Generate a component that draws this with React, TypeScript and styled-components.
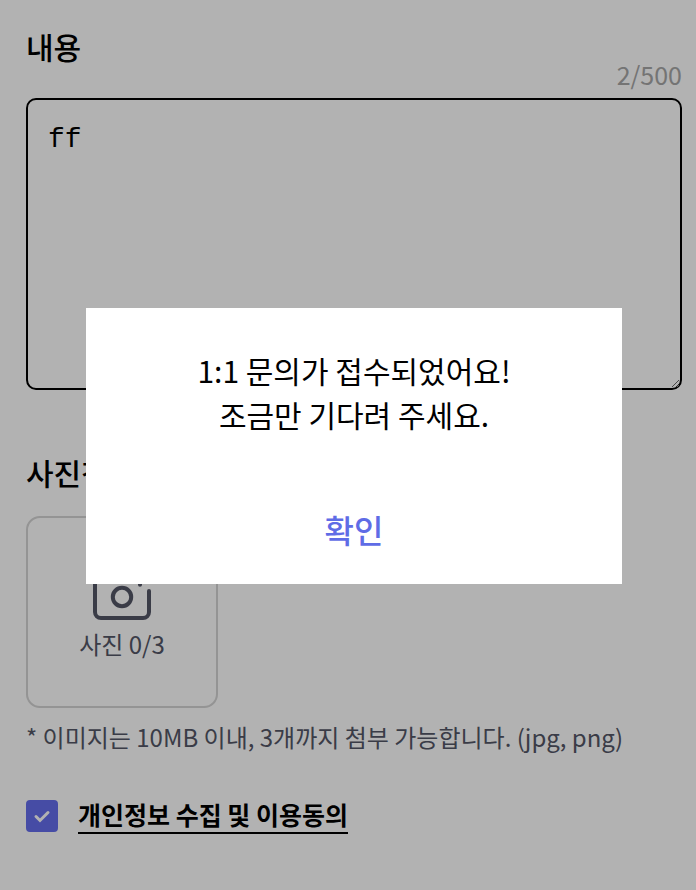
import { useState } from "react";
import styled, { createGlobalStyle } from "styled-components";

const GlobalStyle = createGlobalStyle`
  *, *::before, *::after { box-sizing: border-box; }
  body {
    margin: 0;
    background: #ffffff;
    color: #000000;
    font-family: "Noto Sans CJK KR", sans-serif;
  }
`;

const Form = styled.form`
  display: flex;
  flex-direction: column;
  padding: 24px 14px 56px 26px;
`;

const Label = styled.label`
  font-size: 30px;
  font-weight: 500;
  line-height: 44px;
`;

const FieldHead = styled.div`
  display: flex;
  justify-content: space-between;
  align-items: flex-start;
  height: 74px;
`;

const Counter = styled.span`
  align-self: flex-end;
  padding-bottom: 8px;
  color: #a7a7a7;
  font-size: 25px;
  line-height: 32px;
`;

const Content = styled.textarea`
  display: block;
  width: 100%;
  height: 292px;
  padding: 22px 20px;
  border: 2px solid #000000;
  border-radius: 10px;
  outline: none;
  background: transparent;
  color: #000000;
  font-family: "Liberation Mono", monospace;
  font-size: 28px;
  line-height: 36px;
  resize: both;
`;

const PhotoField = styled.div`
  display: flex;
  flex-direction: column;
  align-items: flex-start;
  gap: 22px;
  margin-top: 60px;
`;

const PhotoButton = styled.button`
  display: flex;
  flex-direction: column;
  align-items: center;
  justify-content: center;
  width: 192px;
  height: 192px;
  padding: 0;
  border: 2px solid #d4d4d4;
  border-radius: 14px;
  background: transparent;
  color: #535666;
  font-family: inherit;
  font-size: 24px;
  line-height: 40px;
`;

const Hint = styled.p`
  margin: 12px 0 0;
  color: #535666;
  font-size: 24px;
  line-height: 34px;
`;

const Consent = styled.div`
  display: flex;
  align-items: flex-start;
  gap: 20px;
  margin-top: 46px;
`;

const CheckWrap = styled.span`
  display: grid;
  width: 32px;
  height: 32px;

  & > * {
    grid-area: 1 / 1;
  }

  svg {
    pointer-events: none;
  }
`;

const CheckInput = styled.input`
  appearance: none;
  width: 32px;
  height: 32px;
  margin: 0;
  border: 2px solid #656eed;
  border-radius: 4px;

  &:checked {
    background: #656eed;
  }
`;

const ConsentLink = styled.a`
  padding-bottom: 4px;
  border-bottom: 2px solid #000000;
  color: #000000;
  font-size: 25px;
  font-weight: 700;
  line-height: 28px;
  text-decoration: none;
`;

const Overlay = styled.div`
  position: fixed;
  inset: 0;
  display: flex;
  align-items: center;
  padding: 2px 74px 0 86px;
  background: rgba(0, 0, 0, 0.3);
`;

const Dialog = styled.div`
  display: flex;
  flex: 1;
  flex-direction: column;
  align-items: center;
  gap: 69px;
  padding: 40px 20px 31px;
  background: #ffffff;
`;

const Message = styled.p`
  margin: 0;
  font-size: 30px;
  line-height: 44px;
  text-align: center;
`;

const Confirm = styled.button`
  padding: 0 20px;
  border: 0;
  background: none;
  color: #5f6ce6;
  font-family: inherit;
  font-size: 32px;
  font-weight: 500;
  line-height: 48px;
`;

function CameraIcon() {
  return (
    <svg width="64" height="64" viewBox="0 0 64 64" fill="none" stroke="currentColor" strokeWidth="4" strokeLinecap="round" aria-hidden="true">
      <path d="M38 12H10a5 5 0 0 0-5 5v35a6 6 0 0 0 6 6h42a6 6 0 0 0 6-6V31" />
      <circle cx="32" cy="37" r="9.2" />
      <path d="M50 6v18.7M41 15h18" />
    </svg>
  );
}

function CheckIcon() {
  return (
    <svg width="32" height="32" viewBox="0 0 32 32" fill="none" stroke="#ffffff" strokeWidth="3" strokeLinecap="round" aria-hidden="true">
      <path d="M10 16.5l4 4 8-8" />
    </svg>
  );
}

export default function App() {
  const [text, setText] = useState("ff");
  const [agreed, setAgreed] = useState(true);
  const [open, setOpen] = useState(true);

  return (
    <>
      <GlobalStyle />
      <Form>
        <FieldHead>
          <Label htmlFor="content">내용</Label>
          <Counter>{text.length}/500</Counter>
        </FieldHead>
        <Content id="content" maxLength={500} spellCheck={false} value={text} onChange={(e) => setText(e.target.value)} />
        <PhotoField>
          <Label htmlFor="photo">사진첨부</Label>
          <PhotoButton id="photo" type="button">
            <CameraIcon />
            <span>사진 0/3</span>
          </PhotoButton>
        </PhotoField>
        <Hint>* 이미지는 10MB 이내, 3개까지 첨부 가능합니다. (jpg, png)</Hint>
        <Consent>
          <CheckWrap>
            <CheckInput type="checkbox" aria-labelledby="consent-text" checked={agreed} onChange={(e) => setAgreed(e.target.checked)} />
            {agreed && <CheckIcon />}
          </CheckWrap>
          <ConsentLink id="consent-text" href="#privacy">개인정보 수집 및 이용동의</ConsentLink>
        </Consent>
      </Form>
      {open && (
        <Overlay>
          <Dialog role="alertdialog" aria-modal="true" aria-describedby="message">
            <Message id="message">
              1:1 문의가 접수되었어요!
              <br />
              조금만 기다려 주세요.
            </Message>
            <Confirm type="button" onClick={() => setOpen(false)}>확인</Confirm>
          </Dialog>
        </Overlay>
      )}
    </>
  );
}
